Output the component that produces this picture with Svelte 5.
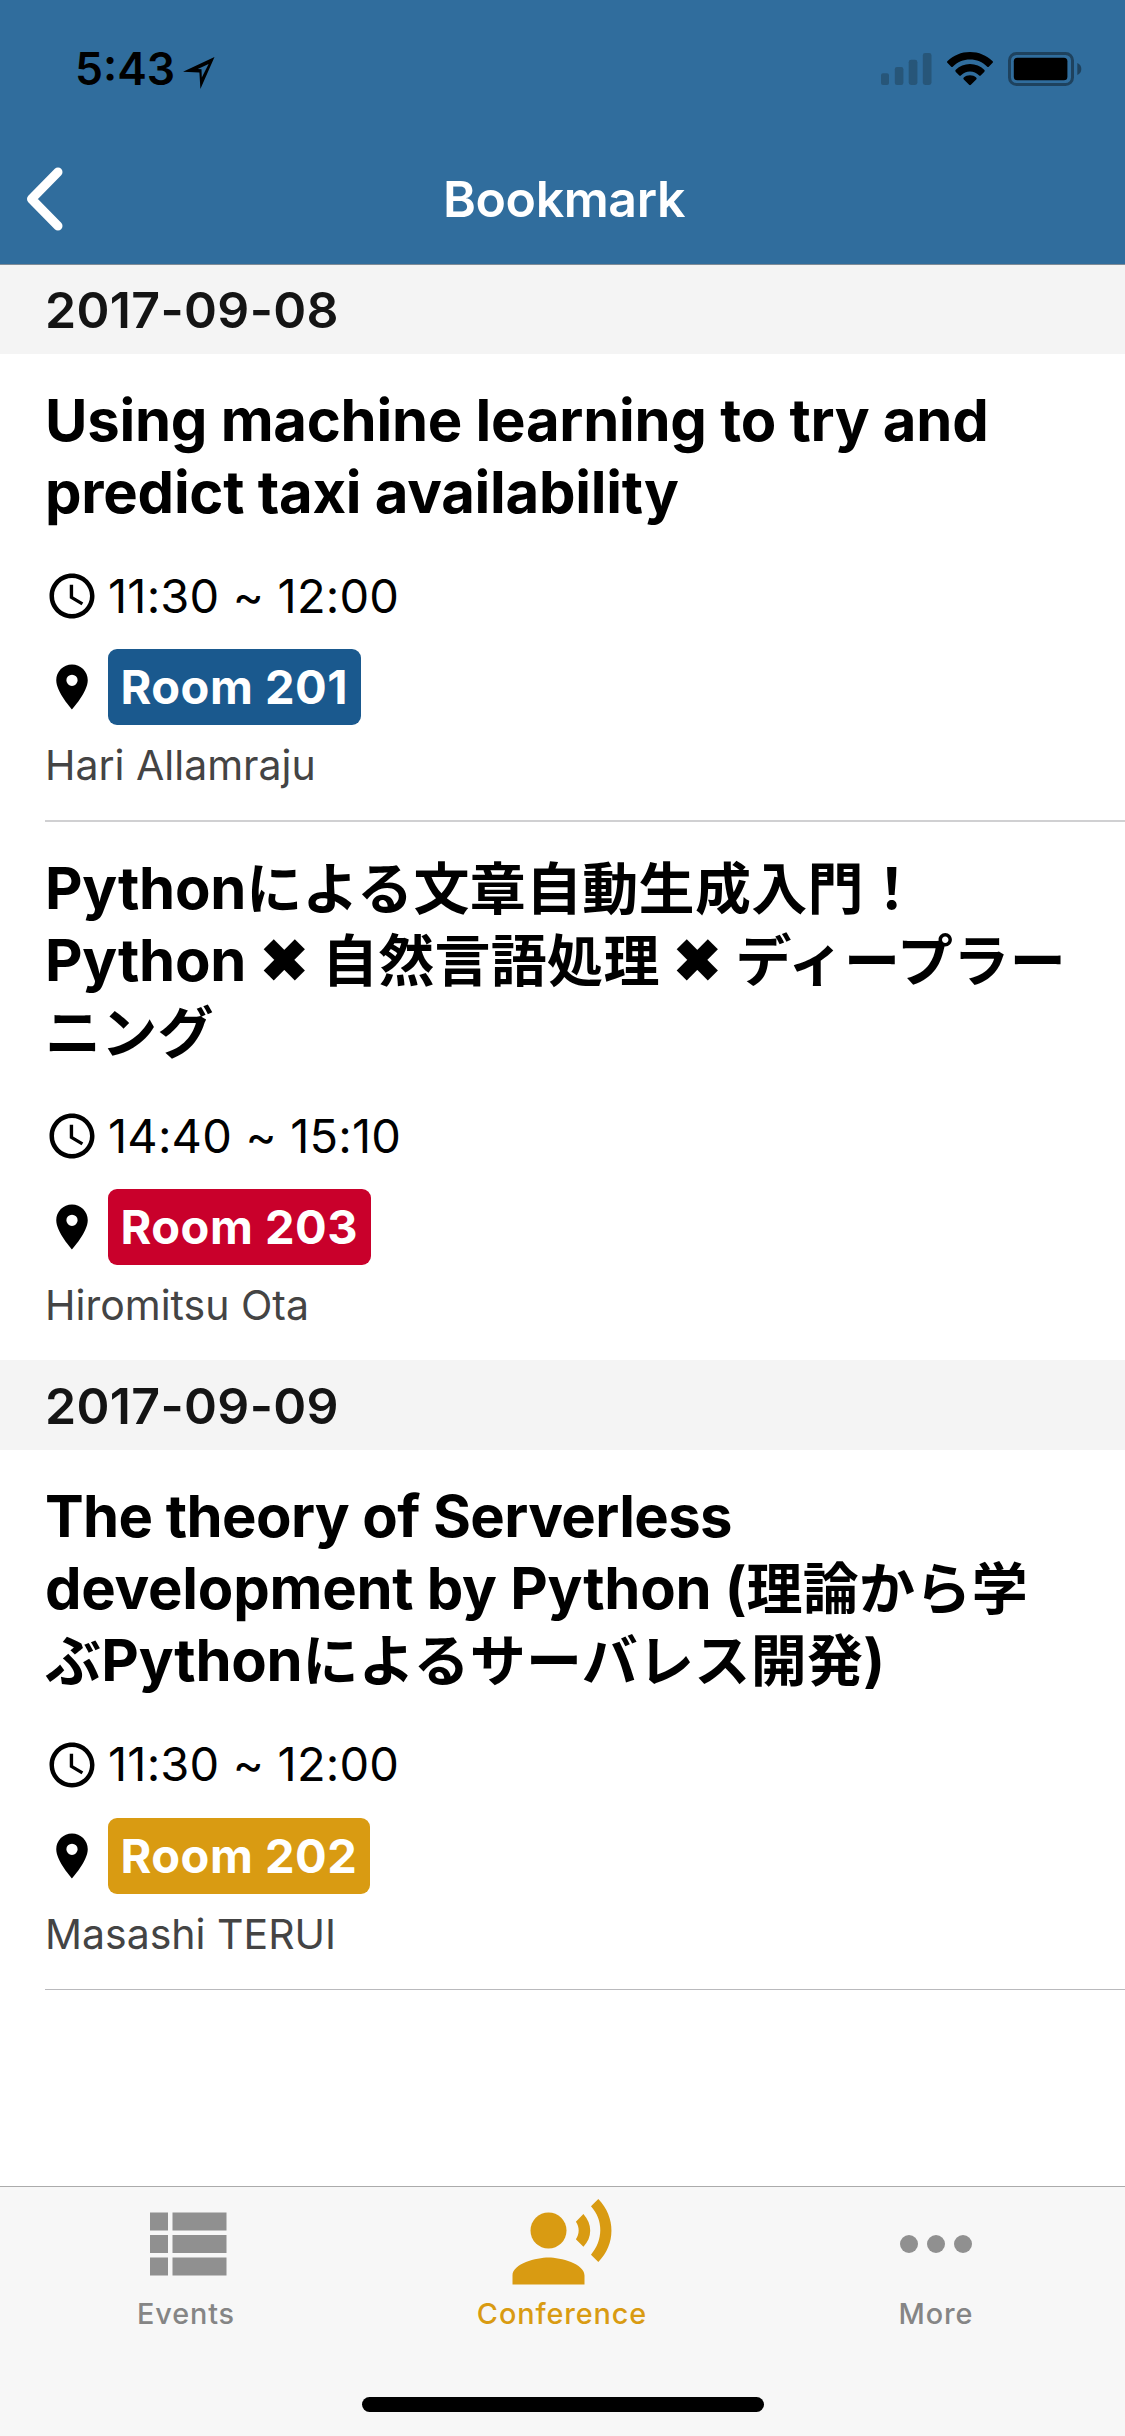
<script>
  const days = [
    {
      date: '2017-09-08',
      talks: [
        {
          lines: ['Using machine learning to try and', 'predict taxi availability'],
          time: '11:30 ~ 12:00',
          room: 'Room 201',
          color: 'blue',
          speaker: 'Hari Allamraju'
        },
        {
          lines: ['Pythonによる文章自動生成入門！', 'Python ✖ 自然言語処理 ✖ ディープラー', 'ニング'],
          time: '14:40 ~ 15:10',
          room: 'Room 203',
          color: 'red',
          speaker: 'Hiromitsu Ota'
        }
      ]
    },
    {
      date: '2017-09-09',
      talks: [
        {
          lines: ['The theory of Serverless', 'development by Python (理論から学', 'ぶPythonによるサーバレス開発)'],
          tightLead: true,
          time: '11:30 ~ 12:00',
          room: 'Room 202',
          color: 'amber',
          speaker: 'Masashi TERUI'
        }
      ]
    }
  ];

  // Splits a line into Latin and Japanese runs so each gets its own type size.
  const runs = (line) =>
    (line.match(/[\u3000-\u9fff\uff00-\uffef]+|[^\u3000-\u9fff\uff00-\uffef]+/g) ?? []).map((text) => ({
      text,
      ja: /[\u3000-\u9fff\uff00-\uffef]/.test(text)
    }));
</script>

<div class="screen">
  <header>
    <div class="status">
      <div class="clock">
        <span>5:43</span>
        <svg width="32" height="32" viewBox="0 0 32 32">
          <path fill-rule="evenodd" d="M31.5 0 0 14.8 16.4 15.600 17.400 32ZM25.600 7 18.800 20.500 18.500 12.300 14.800 12.100Z" />
        </svg>
      </div>
      <div class="indicators">
        <svg class="signal" width="51" height="34" viewBox="0 0 51 34">
          <rect x="0" y="21.3" width="8" height="11.7" rx="2" />
          <rect x="13.8" y="15" width="8.6" height="18" rx="2.2" />
          <rect x="27.7" y="7.8" width="8.7" height="25.2" rx="2.4" />
          <rect x="41.8" y="1" width="8.7" height="32" rx="2.4" />
        </svg>
        <svg class="wifi" width="46" height="34" viewBox="0 0 46 34">
          <path d="M23 0C14.300 0 6.400 3.400.600 8.900a1.500 1.500 0 0 0 0 2.200L4 14.500a1.400 1.400 0 0 0 2 0C10.400 10.100 16.400 7.500 23 7.500s12.600 2.600 17 7a1.400 1.400 0 0 0 2 0l3.400-3.400a1.500 1.500 0 0 0 0-2.200C39.600 3.400 31.700 0 23 0Z" />
          <path d="M23 12.100c-5.500 0-10.500 2.200-14.200 5.700a1.400 1.400 0 0 0 0 2.100l3.300 3.300a1.400 1.400 0 0 0 2 0c2.300-2.300 5.400-3.700 8.900-3.700s6.600 1.400 8.900 3.700a1.400 1.400 0 0 0 2 0l3.300-3.300a1.400 1.400 0 0 0 0-2.100C33.500 14.300 28.500 12.100 23 12.100Z" />
          <path d="M23 23.200c-2.400 0-4.500.8-6.200 2.300a1.300 1.300 0 0 0 0 1.900l5.300 5.300a1.300 1.300 0 0 0 1.800 0l5.300-5.300a1.300 1.300 0 0 0 0-1.900C27.500 24 25.400 23.200 23 23.200Z" />
        </svg>
        <svg class="battery" width="74" height="34" viewBox="0 0 74 34">
          <rect class="shell" x="1.500" y="1.500" width="63" height="31" rx="7" />
          <rect x="5.800" y="5.800" width="53.600" height="22.400" rx="3.500" />
          <path class="nub" d="M69.300 11c2.600.9 4 3.300 4 6s-1.400 5.100-4 6Z" />
        </svg>
      </div>
    </div>
    <nav>
      <svg width="40" height="68" viewBox="0 0 40 68">
        <path d="M33 7 6.500 34 33 61" />
      </svg>
      <h1>Bookmark</h1>
    </nav>
  </header>

  <main>
    {#each days as day}
      <section>
        <h2>{day.date}</h2>
        {#each day.talks as talk}
          <article>
            <h3 class:tight-lead={talk.tightLead}>
              {#each talk.lines as line}
                <span class="line">{#each runs(line) as run}<span class:ja={run.ja}>{run.text}</span>{/each}</span>
              {/each}
            </h3>
            <div class="time">
              <svg width="54" height="54" viewBox="0 0 24 24">
                <path d="M11.990 2C6.470 2 2 6.480 2 12s4.470 10 9.990 10C17.520 22 22 17.520 22 12S17.520 2 11.990 2zM12 20c-4.420 0-8-3.580-8-8s3.580-8 8-8 8 3.580 8 8-3.580 8-8 8zM12.500 7H11v6l5.250 3.150.750-1.230-4.500-2.670z" />
              </svg>
              <span>{talk.time}</span>
            </div>
            <div class="place">
              <svg width="54" height="54" viewBox="0 0 24 24">
                <path d="M12 2C8.130 2 5 5.130 5 9c0 5.250 7 13 7 13s7-7.750 7-13c0-3.870-3.130-7-7-7zm0 9.500a2.500 2.500 0 0 1 0-5 2.500 2.500 0 0 1 0 5z" />
              </svg>
              <span class="badge {talk.color}">{talk.room}</span>
            </div>
            <p>{talk.speaker}</p>
          </article>
        {/each}
      </section>
    {/each}
  </main>

  <footer>
    <div class="tabs">
      <div class="tab">
        <svg width="108" height="108" viewBox="0 0 24 24">
          <path d="M4 14h4v-4H4v4zm0 5h4v-4H4v4zM4 9h4V5H4v4zm5 5h12v-4H9v4zm0 5h12v-4H9v4zM9 5v4h12V5H9z" />
        </svg>
        <span>Events</span>
      </div>
      <div class="tab active">
        <svg width="108" height="108" viewBox="0 0 24 24">
          <circle cx="9" cy="9" r="4" />
          <path d="M9 15c-2.670 0-8 1.340-8 4v2h16v-2c0-2.660-5.330-4-8-4zm7.760-9.640l-1.680 1.690c.84 1.180.84 2.710 0 3.890l1.680 1.690c2.020-2.020 2.020-5.070 0-7.270zM20.070 2l-1.630 1.630c2.770 3.020 2.770 7.560 0 10.740L20.070 16c3.900-3.890 3.910-9.950 0-14z" />
        </svg>
        <span>Conference</span>
      </div>
      <div class="tab">
        <svg width="108" height="108" viewBox="0 0 24 24">
          <circle cx="6" cy="12" r="2" />
          <circle cx="12" cy="12" r="2" />
          <circle cx="18" cy="12" r="2" />
        </svg>
        <span>More</span>
      </div>
    </div>
    <div class="home"></div>
  </footer>
</div>

<style>
  :global(body) {
    margin: 0;
    background: #fff;
  }

  .screen {
    display: flex;
    flex-direction: column;
    width: 1125px;
    height: 2436px;
    overflow: hidden;
    background: #fff;
    color: #000;
    font-family: Inter, 'Noto Sans CJK JP', sans-serif;
  }

  svg {
    display: block;
    flex: none;
  }

  h1,
  h2,
  h3,
  p {
    margin: 0;
  }

  header {
    box-sizing: border-box;
    height: 265px;
    flex: none;
    background: #306d9d;
    border-bottom: 1px solid #7f8c98;
  }

  .status {
    box-sizing: border-box;
    display: flex;
    justify-content: space-between;
    align-items: center;
    height: 132px;
    padding: 6px 43px 0 75px;
  }

  .clock {
    display: flex;
    align-items: center;
    gap: 8px;
    font-size: 44.500px;
    font-weight: 600;
    line-height: 54px;
  }

  .clock svg {
    margin-top: 7px;
  }

  .indicators {
    display: flex;
    align-items: center;
  }

  .signal {
    fill: #275679;
    margin-right: 15px;
  }

  .wifi {
    margin-right: 15px;
  }

  .shell {
    fill: none;
    stroke: #1e425e;
    stroke-width: 3;
  }

  .nub {
    fill: #1e425e;
  }

  nav {
    display: grid;
    grid-template-columns: 120px 1fr 120px;
    align-items: center;
    height: 132px;
    padding-top: 1px;
    box-sizing: border-box;
  }

  nav svg {
    margin-left: 25px;
    fill: none;
    stroke: #fff;
    stroke-width: 9;
    stroke-linecap: round;
    stroke-linejoin: round;
  }

  h1 {
    padding-left: 3px;
    color: #fff;
    font-size: 50px;
    font-weight: 600;
    letter-spacing: -0.400px;
    text-align: center;
  }

  h2 {
    box-sizing: border-box;
    height: 90px;
    padding: 3px 45px 0;
    background: #f4f4f4;
    color: #141414;
    font-size: 50px;
    font-weight: 600;
    letter-spacing: 0.330px;
    line-height: 87px;
  }

  section:first-child h2:first-child {
    height: 89px;
    padding-top: 2px;
  }

  article {
    margin-left: 45px;
    padding: 31px 0 30px;
    border-bottom: 2px solid #d0d0d2;
  }

  section:first-child article:last-child {
    border-bottom: 0;
  }

  section:last-child article:last-child {
    border-bottom: 1px solid #b9b9bc;
  }

  h3 {
    font-size: 58px;
    font-weight: 700;
    letter-spacing: -0.250px;
  }

  .line {
    display: block;
    height: 71.700px;
    line-height: 71.700px;
    white-space: nowrap;
  }

  .tight-lead .line:first-child {
    letter-spacing: -0.600px;
  }

  .ja {
    font-family: 'Noto Sans CJK JP', sans-serif;
    font-size: 56px;
    line-height: 1;
    letter-spacing: 0.300px;
  }

  .time,
  .place {
    display: flex;
    align-items: center;
    gap: 9px;
  }

  .time {
    height: 58px;
    margin-top: 39px;
    font-size: 47px;
    letter-spacing: 0.200px;
  }

  .time span {
    padding-bottom: 2px;
  }

  .place {
    margin-top: 24px;
  }

  .badge {
    height: 76px;
    padding: 0 12.500px;
    border-radius: 9px;
    color: #fff;
    font-size: 47px;
    font-weight: 700;
    letter-spacing: 0.500px;
    line-height: 76px;
  }

  .blue {
    background: #1a598e;
  }

  .red {
    background: #c9002b;
  }

  .amber {
    background: #d99b12;
  }

  p {
    margin-top: 15px;
    color: #444;
    font-size: 41px;
    letter-spacing: 0;
    line-height: 50px;
  }

  footer {
    box-sizing: border-box;
    display: flex;
    flex-direction: column;
    justify-content: space-between;
    align-items: center;
    height: 250px;
    margin-top: auto;
    padding: 3px 0 24px;
    border-top: 1px solid #ababab;
    background: #f7f7f7;
  }

  .tabs {
    display: grid;
    grid-template-columns: 372px 380px 368px;
    width: 1125px;
  }

  .tab {
    display: flex;
    flex-direction: column;
    align-items: center;
    color: #858585;
    font-size: 28.800px;
    font-weight: 500;
    letter-spacing: 0.900px;
    line-height: 32px;
  }

  .tab svg {
    fill: #909090;
  }

  .active {
    color: #d99b12;
  }

  .active svg {
    fill: #d99b12;
  }

  .home {
    width: 402px;
    height: 15px;
    border-radius: 8px;
    background: #000;
  }
</style>
